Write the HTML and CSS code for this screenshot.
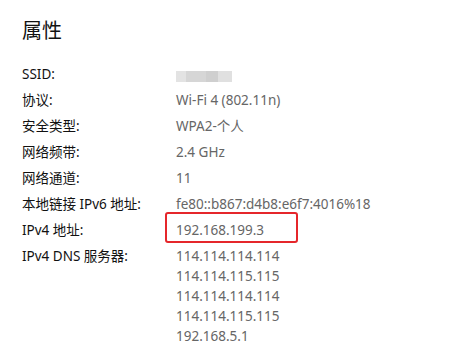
FILE: index.html
```html
<!DOCTYPE html>
<html lang="zh-CN">
<head>
<meta charset="utf-8">
<link rel="stylesheet" href="styles.css">
</head>
<body>
<main class="panel">
  <h1 class="title">属性</h1>
  <dl class="props">
    <dt>SSID:</dt>
    <dd><span class="blur"><i class="b1"></i><i class="b2"></i><i class="b3"></i><i class="b4"></i></span></dd>
    <dt>协议:</dt>
    <dd>Wi-Fi 4 (802.11n)</dd>
    <dt>安全类型:</dt>
    <dd>WPA2-个人</dd>
    <dt>网络频带:</dt>
    <dd>2.4 GHz</dd>
    <dt>网络通道:</dt>
    <dd>11</dd>
    <dt>本地链接 IPv6 地址:</dt>
    <dd>fe80::b867:d4b8:e6f7:4016%18</dd>
    <dt>IPv4 地址:</dt>
    <dd><span class="marked">192.168.199.3</span></dd>
    <dt>IPv4 DNS 服务器:</dt>
    <dd class="multi">
      <span>114.114.114.114</span>
      <span>114.114.115.115</span>
      <span>114.114.114.114</span>
      <span>114.114.115.115</span>
      <span>192.168.5.1</span>
    </dd>
  </dl>
</main>
</body>
</html>
```

FILE: styles.css
```css
html, body {
  margin: 0;
  padding: 0;
  background: #ffffff;
}
body {
  width: 449px;
  height: 353px;
  overflow: hidden;
  font-family: "Noto Sans", "Noto Sans CJK SC", sans-serif;
}
.panel {
  padding: 16px 0 0 22px;
}
.title {
  margin: 0;
  font-size: 20px;
  font-weight: 400;
  line-height: 30px;
  color: #111111;
}
.props {
  margin: 18px 0 0 0;
  display: grid;
  grid-template-columns: 154px 1fr;
  row-gap: 6px;
  font-size: 13.5px;
  line-height: 20px;
}
.props dt {
  margin: 0;
  color: #111111;
}
.props dd {
  margin: 0;
  color: #666666;
}
.multi {
  display: flex;
  flex-direction: column;
}
.blur {
  display: inline-flex;
  align-items: center;
  height: 20px;
  vertical-align: top;
  position: relative;
  filter: blur(0.6px);
}
.blur i {
  display: block;
  height: 11px;
  margin-top: 4px;
  background: #dedede;
}
.blur .b1 { width: 10px; background: #e3e3e3; }
.blur .b2 { width: 20px; background: #d6d6d6; }
.blur .b3 { width: 12px; background: #cfcfcf; }
.blur .b4 { width: 14px; background: #e0e0e0; }
.marked {
  position: relative;
  display: inline-block;
}
.marked::after {
  content: "";
  position: absolute;
  left: -11px;
  top: -8px;
  width: 129px;
  height: 27px;
  border: 2px solid #e5262b;
  border-radius: 3px;
}
```
